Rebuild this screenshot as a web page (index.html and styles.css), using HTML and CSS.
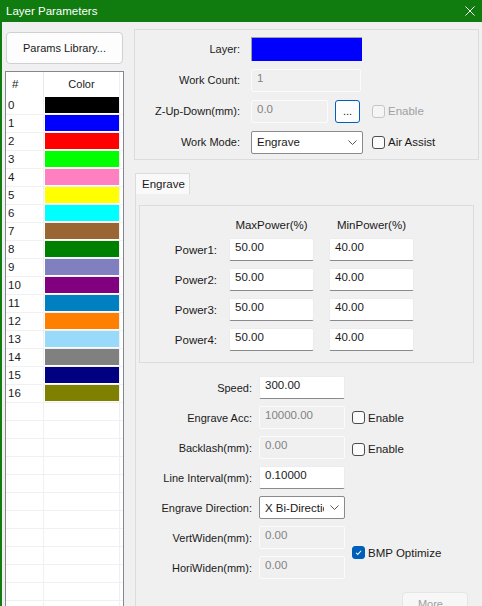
FILE: index.html
```html
<!doctype html>
<html lang="en">
<head>
    <meta charset="UTF-8">
    <title>Layer Parameters</title>
    <link rel="stylesheet" href="styles.css">
</head>
<body>
    <div class="titlebar">
        <span>Layer Parameters</span>
        <svg class="close" viewBox="0 0 10 10"><path d="M0.5 0.5L9.5 9.5M9.5 0.5L0.5 9.5"/></svg>
    </div>

    <div class="window">
        <div class="side">
            <button class="btn lib">Params Library...</button>
            <div class="list">
                <div class="list-head"><div class="num">#</div><div class="col">Color</div></div>
                <div class="row"><div class="num">0</div><div class="col"><span class="sw" style="background:#000000"></span></div></div>
                <div class="row"><div class="num">1</div><div class="col"><span class="sw" style="background:#0000ff"></span></div></div>
                <div class="row"><div class="num">2</div><div class="col"><span class="sw" style="background:#ff0000"></span></div></div>
                <div class="row"><div class="num">3</div><div class="col"><span class="sw" style="background:#00ff00"></span></div></div>
                <div class="row"><div class="num">4</div><div class="col"><span class="sw" style="background:#ff80c0"></span></div></div>
                <div class="row"><div class="num">5</div><div class="col"><span class="sw" style="background:#ffff00"></span></div></div>
                <div class="row"><div class="num">6</div><div class="col"><span class="sw" style="background:#00ffff"></span></div></div>
                <div class="row"><div class="num">7</div><div class="col"><span class="sw" style="background:#996633"></span></div></div>
                <div class="row"><div class="num">8</div><div class="col"><span class="sw" style="background:#008000"></span></div></div>
                <div class="row"><div class="num">9</div><div class="col"><span class="sw" style="background:#8080c0"></span></div></div>
                <div class="row"><div class="num">10</div><div class="col"><span class="sw" style="background:#800080"></span></div></div>
                <div class="row"><div class="num">11</div><div class="col"><span class="sw" style="background:#0080c0"></span></div></div>
                <div class="row"><div class="num">12</div><div class="col"><span class="sw" style="background:#ff8000"></span></div></div>
                <div class="row"><div class="num">13</div><div class="col"><span class="sw" style="background:#99d9fa"></span></div></div>
                <div class="row"><div class="num">14</div><div class="col"><span class="sw" style="background:#808080"></span></div></div>
                <div class="row"><div class="num">15</div><div class="col"><span class="sw" style="background:#000080"></span></div></div>
                <div class="row"><div class="num">16</div><div class="col"><span class="sw" style="background:#808000"></span></div></div>
                <div class="row"><div class="num"></div><div class="col"></div></div>
                <div class="row"><div class="num"></div><div class="col"></div></div>
                <div class="row"><div class="num"></div><div class="col"></div></div>
                <div class="row"><div class="num"></div><div class="col"></div></div>
                <div class="row"><div class="num"></div><div class="col"></div></div>
                <div class="row"><div class="num"></div><div class="col"></div></div>
                <div class="row"><div class="num"></div><div class="col"></div></div>
                <div class="row"><div class="num"></div><div class="col"></div></div>
                <div class="row"><div class="num"></div><div class="col"></div></div>
                <div class="row"><div class="num"></div><div class="col"></div></div>
                <div class="row"><div class="num"></div><div class="col"></div></div>
                <div class="row"><div class="num"></div><div class="col"></div></div>
            </div>
        </div>

        <div class="main">
            <div class="grp">
                <div class="frow">
                    <div class="lbl">Layer:</div>
                    <div class="layer-sw"></div>
                </div>
                <div class="frow">
                    <div class="lbl">Work Count:</div>
                    <div class="field off w110">1</div>
                </div>
                <div class="frow">
                    <div class="lbl">Z-Up-Down(mm):</div>
                    <div class="field off w77">0.0</div>
                    <button class="btn dots">...</button>
                    <span class="check dim"><span class="box"></span>Enable</span>
                </div>
                <div class="frow">
                    <div class="lbl">Work Mode:</div>
                    <div class="select w112"><span class="sel-text">Engrave</span><svg class="chev" viewBox="0 0 9 5"><path d="M0.5 0.5L4.5 4.5L8.5 0.5"/></svg></div>
                    <span class="check air"><span class="box"></span>Air Assist</span>
                </div>
            </div>

            <div class="tab">Engrave</div>
            <div class="page">
                <div class="pgrp">
                    <div></div>
                    <div class="phead">MaxPower(%)</div>
                    <div class="phead end">MinPower(%)</div>

                    <div class="plbl">Power1:</div>
                    <div class="field">50.00</div>
                    <div class="field end">40.00</div>

                    <div class="plbl">Power2:</div>
                    <div class="field">50.00</div>
                    <div class="field end">40.00</div>

                    <div class="plbl">Power3:</div>
                    <div class="field">50.00</div>
                    <div class="field end">40.00</div>

                    <div class="plbl">Power4:</div>
                    <div class="field">50.00</div>
                    <div class="field end">40.00</div>
                </div>

                <div class="opts">
                    <div class="olbl">Speed:</div>
                    <div class="field">300.00</div>
                    <div></div>

                    <div class="olbl">Engrave Acc:</div>
                    <div class="field off">10000.00</div>
                    <span class="check"><span class="box"></span>Enable</span>

                    <div class="olbl">Backlash(mm):</div>
                    <div class="field off">0.00</div>
                    <span class="check low"><span class="box"></span>Enable</span>

                    <div class="olbl">Line Interval(mm):</div>
                    <div class="field">0.10000</div>
                    <div></div>

                    <div class="olbl">Engrave Direction:</div>
                    <div class="select"><span class="sel-text">X Bi-Direction</span><svg class="chev" viewBox="0 0 9 5"><path d="M0.5 0.5L4.5 4.5L8.5 0.5"/></svg></div>
                    <div></div>

                    <div class="olbl">VertWiden(mm):</div>
                    <div class="field off">0.00</div>
                    <span class="check bmp"><span class="box on"><svg viewBox="0 0 13 13"><path d="M3.5 6.8L5.6 8.8L9.6 4.4"/></svg></span>BMP Optimize</span>

                    <div class="olbl">HoriWiden(mm):</div>
                    <div class="field off">0.00</div>
                </div>

                <button class="btn more">More...</button>
            </div>
        </div>
    </div>
</body>
</html>
```

FILE: styles.css
```css
* {
    box-sizing: border-box;
}
body {
    margin: 0;
    width: 482px;
    height: 606px;
    overflow: hidden;
    background: #f0f0f0;
    font-family: "Liberation Sans", Arial, sans-serif;
    font-size: 11px;
    color: #1a1a1a;
}

/* title bar */
.titlebar {
    height: 22px;
    background: #107c10;
    color: #fff;
    font-size: 11.5px;
    display: flex;
    align-items: center;
    justify-content: space-between;
    padding: 0 7px 1px 6px;
}
.close {
    width: 10px;
    height: 10px;
    fill: none;
    stroke: #fff;
    stroke-width: 1;
}

.window {
    display: flex;
    height: 584px;
    border-left: 2px solid #107c10;
}

/* left column */
.side {
    flex: none;
    width: 119px;
    margin-left: 3px;
    display: flex;
    flex-direction: column;
}
.btn {
    font: inherit;
    color: #1a1a1a;
    background: #fdfdfd;
    border: 1px solid #d0d0d0;
    border-radius: 4px;
    padding: 0;
}
.lib {
    margin: 10px 0 0 1px;
    width: 117px;
    height: 32px;
}
.list {
    flex: 1;
    margin-top: 7px;
    background: #fff;
    border: 1px solid #828790;
    border-bottom: none;
    overflow: hidden;
}
.list-head,
.row {
    display: flex;
}
.list-head {
    height: 25px;
    line-height: 25px;
}
.list-head .num {
    padding-left: 6px;
    line-height: 25px;
    border-right-color: #e8e8e8;
}
.list-head .col {
    text-align: center;
    padding: 0;
}
.row {
    height: 18px;
    border-bottom: 1px solid #f0f0f0;
}
.num {
    width: 38px;
    padding-left: 2px;
    border-right: 1px solid #f0f0f0;
    line-height: 17px;
    font-size: 11.5px;
}
.col {
    width: 76px;
    padding-left: 1px;
    border-right: 1px solid #f0f0f0;
}
.sw {
    display: block;
    width: 74px;
    height: 16px;
}

/* right column */
.main {
    flex: none;
    width: 345px;
    margin-left: 10px;
    display: flex;
    flex-direction: column;
}
.grp {
    margin-top: 7px;
    border: 1px solid #dcdcdc;
    padding: 7px 0 5px;
    display: flex;
    flex-direction: column;
    gap: 7px;
}
.frow {
    display: flex;
    align-items: center;
    height: 24px;
}
.lbl {
    flex: none;
    width: 105px;
    margin-right: 11px;
    text-align: right;
}
.layer-sw {
    width: 111px;
    height: 24px;
    background: #0000ff;
    border-top: 1px solid #a0a0a0;
    border-left: 1px solid #a0a0a0;
}

.field {
    height: 23px;
    padding: 2px 5px 0;
    background: #fff;
    border: 1px solid #ececec;
    border-bottom-color: #8a8a8a;
    border-radius: 2px;
    white-space: nowrap;
    overflow: hidden;
    font-size: 11.5px;
}
.field.off {
    background: #f0f0f0;
    border-color: #fbfbfb;
    color: #838383;
}
.w110 {
    width: 110px;
}
.w77 {
    width: 77px;
}
.w112 {
    width: 112px;
}
.dots {
    width: 25px;
    height: 23px;
    margin-left: 7px;
    border-color: #005fb8;
    border-radius: 3px;
}

.select {
    height: 23px;
    display: flex;
    align-items: center;
    background: #fff;
    border: 1px solid #8a8a8a;
    border-radius: 2px;
    padding: 0 5px 0 5px;
}
.sel-text {
    flex: 1;
    overflow: hidden;
    white-space: nowrap;
    font-size: 11.5px;
}
.chev {
    flex: none;
    width: 9px;
    height: 5px;
    margin-left: 6px;
    fill: none;
    stroke: #555;
    stroke-width: 1;
}

.check {
    display: flex;
    align-items: center;
    font-size: 11.5px;
}
.box {
    width: 13px;
    height: 13px;
    margin-right: 3px;
    background: #fbfbfb;
    border: 1px solid #4d4d4d;
    border-radius: 3px;
}
.check.dim {
    color: #a0a0a0;
    margin-left: 12px;
}
.check.dim .box {
    border-color: #c6c6c6;
    background: #f5f5f5;
}
.check.air {
    margin-left: 9px;
}
.check.low {
    margin-top: 3px;
}
.box.on {
    background: #005fb8;
    border-color: #005fb8;
}
.box.on svg {
    display: block;
    width: 11px;
    height: 11px;
    fill: none;
    stroke: #fff;
    stroke-width: 1.2;
}

/* tab */
.tab {
    margin: 13px 0 0 1px;
    width: 55px;
    height: 21px;
    line-height: 20px;
    padding-left: 6px;
    font-size: 11.5px;
    background: #f9f9f9;
    border: 1px solid #dcdcdc;
    border-bottom: none;
}
.page {
    flex: 1;
    margin-left: 1px;
    border-left: 1px solid #dcdcdc;
    padding: 11px 5px 0 3px;
    display: flex;
    flex-direction: column;
}
.pgrp {
    border: 1px solid #dcdcdc;
    padding: 13px 0 11px;
    display: grid;
    grid-template-columns: 77px 85px 88px;
    grid-template-rows: 12px repeat(4, 23px);
    column-gap: 12px;
    row-gap: 7px;
}
.phead {
    width: 85px;
    text-align: center;
    line-height: 12px;
    font-size: 11.5px;
}
.end {
    justify-self: end;
    width: 85px;
}
.plbl {
    text-align: right;
    align-self: center;
    font-size: 11.5px;
}

.opts {
    margin-top: 13px;
    display: grid;
    grid-template-columns: 113px 86px auto;
    grid-auto-rows: 23px;
    column-gap: 7px;
    row-gap: 7px;
    align-items: center;
}
.olbl {
    text-align: right;
}
.bmp {
    grid-column: 3;
    grid-row: 6 / span 2;
}

.more {
    align-self: flex-end;
    margin: 13px 6px 0 0;
    width: 66px;
    height: 23px;
    color: #a0a0a0;
    background: #f7f7f7;
    border-color: #e5e5e5;
}
```
